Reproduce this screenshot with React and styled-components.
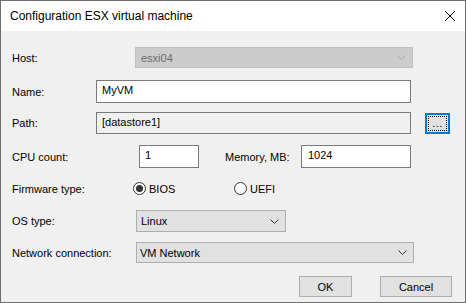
import React from "react";
import styled, { createGlobalStyle } from "styled-components";

const Global = createGlobalStyle`
  html, body { margin: 0; padding: 0; background: #ffffff; }
  body { font-family: "Liberation Sans", Arial, sans-serif; font-size: 11px; color: #000; }
`;

const Window = styled.div`
  width: 466px;
  height: 303px;
  box-sizing: border-box;
  border: 1px solid #6f6f6f;
  background: #f0f0f0;
  display: flex;
  flex-direction: column;
  overflow: hidden;
`;

const TitleBar = styled.div`
  height: 30px;
  background: #ffffff;
  display: flex;
  align-items: center;
  justify-content: space-between;
  padding: 0 10px 0 9px;
  flex-shrink: 0;
`;

const Title = styled.div`
  font-size: 12px;
  color: #000;
  margin-top: -1px;
`;

const Close = styled.div`
  width: 10px;
  height: 10px;
  display: flex;
  margin-right: 0;
`;

const Body = styled.div`
  flex: 1;
  display: flex;
  flex-direction: column;
  padding: 16px 13px 0 11px;
`;

const Row = styled.div`
  display: flex;
  align-items: center;
  height: ${(p) => p.$h}px;
  margin-top: ${(p) => p.$mt || 0}px;
`;

const Label = styled.div`
  width: ${(p) => p.$w}px;
  flex-shrink: 0;
  color: #000;
  white-space: nowrap;
`;

const Edit = styled.div`
  box-sizing: border-box;
  width: ${(p) => p.$w}px;
  height: 100%;
  border: 1px solid #7a7a7a;
  background: ${(p) => (p.$ro ? "#f0f0f0" : "#ffffff")};
  padding: 3px 0 0 ${(p) => p.$pl || 4}px;
  line-height: 13px;
  color: #000;
  flex-shrink: 0;
`;

const Combo = styled.div`
  box-sizing: border-box;
  width: ${(p) => p.$w}px;
  height: 100%;
  border: 1px solid ${(p) => (p.$disabled ? "#bfbfbf" : "#adadad")};
  background: ${(p) => (p.$disabled ? "#cccccc" : "#e1e1e1")};
  color: ${(p) => (p.$disabled ? "#6d6d6d" : "#000")};
  display: flex;
  align-items: center;
  justify-content: space-between;
  padding: 0 6px 0 ${(p) => p.$pl || 3}px;
  flex-shrink: 0;
`;

const BrowseButton = styled.div`
  box-sizing: border-box;
  width: 25px;
  height: 21px;
  margin-left: 14px;
  border: 2px solid #0078d7;
  background: #e1e1e1;
  padding: 1px;
  flex-shrink: 0;
  display: flex;
`;

const FocusRect = styled.div`
  flex: 1;
  border: 1px dotted #000;
  display: flex;
  align-items: flex-end;
  justify-content: center;
  font-size: 11px;
  line-height: 11px;
  padding-bottom: 1px;
  letter-spacing: 0.5px;
`;

const Spacer = styled.div`
  width: ${(p) => p.$w}px;
  flex-shrink: 0;
`;

const Radio = styled.div`
  display: flex;
  align-items: center;
  width: ${(p) => p.$w}px;
  flex-shrink: 0;
`;

const RadioCircle = styled.div`
  box-sizing: border-box;
  width: 13px;
  height: 13px;
  border-radius: 50%;
  border: 1px solid #333;
  background: #fff;
  display: flex;
  align-items: center;
  justify-content: center;
  margin-right: 3px;
  &::after {
    content: "";
    width: 7px;
    height: 7px;
    border-radius: 50%;
    background: ${(p) => (p.$checked ? "#333" : "transparent")};
  }
`;

const Buttons = styled.div`
  display: flex;
  justify-content: flex-end;
  gap: 28px;
  margin-top: 13px;
  padding-right: 0;
`;

const Button = styled.div`
  box-sizing: border-box;
  width: ${(p) => p.$w}px;
  height: 21px;
  border: 1px solid #adadad;
  background: #e1e1e1;
  display: flex;
  align-items: center;
  justify-content: center;
  color: #000;
`;

const Chevron = ({ color }) => (
  <svg width="9" height="5" viewBox="0 0 9 5">
    <path d="M0.5 0.5 L4.5 4.5 L8.5 0.5" fill="none" stroke={color} strokeWidth="1" />
  </svg>
);

export default function App() {
  return (
    <>
      <Global />
      <Window>
        <TitleBar>
          <Title>Configuration ESX virtual machine</Title>
          <Close>
            <svg width="10" height="10" viewBox="0 0 10 10">
              <path d="M0 0 L10 10 M10 0 L0 10" stroke="#000" strokeWidth="1" />
            </svg>
          </Close>
        </TitleBar>
        <Body>
          <Row $h={21}>
            <Label $w={123}>Host:</Label>
            <Combo $w={278} $disabled $pl={5}>
              <span>esxi04</span>
              <Chevron color="#a6a6a6" />
            </Combo>
          </Row>
          <Row $h={23} $mt={12}>
            <Label $w={84}>Name:</Label>
            <Edit $w={315} $pl={5}>MyVM</Edit>
          </Row>
          <Row $h={22} $mt={9}>
            <Label $w={84}>Path:</Label>
            <Edit $w={315} $ro $pl={5}>[datastore1]</Edit>
            <BrowseButton>
              <FocusRect>...</FocusRect>
            </BrowseButton>
          </Row>
          <Row $h={23} $mt={11}>
            <Label $w={127}>CPU count:</Label>
            <Edit $w={60} $pl={5}>1</Edit>
            <Spacer $w={26} />
            <Label $w={76}>Memory, MB:</Label>
            <Edit $w={110} $pl={6}>1024</Edit>
          </Row>
          <Row $h={17} $mt={12}>
            <Label $w={121}>Firmware type:</Label>
            <Radio $w={101}>
              <RadioCircle $checked />
              <span>BIOS</span>
            </Radio>
            <Radio $w={60}>
              <RadioCircle />
              <span>UEFI</span>
            </Radio>
          </Row>
          <Row $h={22} $mt={13}>
            <Label $w={124}>OS type:</Label>
            <Combo $w={150} $pl={4}>
              <span>Linux</span>
              <Chevron color="#333" />
            </Combo>
          </Row>
          <Row $h={21} $mt={10}>
            <Label $w={124}>Network connection:</Label>
            <Combo $w={278} $pl={3}>
              <span>VM Network</span>
              <Chevron color="#333" />
            </Combo>
          </Row>
          <Buttons>
            <Button $w={53}>OK</Button>
            <Button $w={72}>Cancel</Button>
          </Buttons>
        </Body>
      </Window>
    </>
  );
}
